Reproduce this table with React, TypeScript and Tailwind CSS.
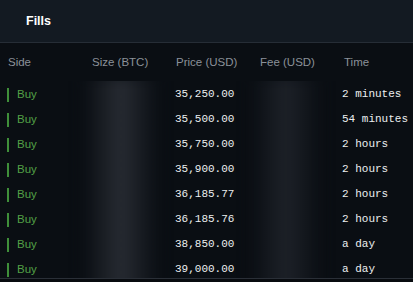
const FILLS = [
  { price: '35,250.00', time: '2 minutes' },
  { price: '35,500.00', time: '54 minutes' },
  { price: '35,750.00', time: '2 hours' },
  { price: '35,900.00', time: '2 hours' },
  { price: '36,185.77', time: '2 hours' },
  { price: '36,185.76', time: '2 hours' },
  { price: '38,850.00', time: 'a day' },
  { price: '39,000.00', time: 'a day' },
]

const COLS = ['Side', 'Size (BTC)', 'Price (USD)', 'Fee (USD)', 'Time']

export default function App() {
  return (
    <div className="w-[413px] h-[282px] bg-[#0a0e13] flex flex-col overflow-hidden" style={{ fontFamily: '"Liberation Sans", Arial, sans-serif' }}>
      {/* Header */}
      <div className="h-[43px] shrink-0 bg-[#131a22] border-b border-[#262d36] flex items-center px-[26px]">
        <span className="text-white font-bold text-[12.5px]">Fills</span>
      </div>

      {/* Column titles */}
      <div className="h-[38px] shrink-0 flex items-center pl-[8px] pt-[1px] text-[11.5px] text-[#8b9199]">
        {COLS.map(c => (
          <div key={c} className="w-[84px] shrink-0">{c}</div>
        ))}
      </div>

      {/* Rows */}
      <div className="relative h-[197px] shrink-0 overflow-hidden pt-[1px]">
        {FILLS.map((f, i) => (
          <div key={i} className="h-[25px] flex items-center pl-[7px]">
            <div className="w-[84px] shrink-0 flex items-center gap-[8px]">
              <span className="w-[2px] h-[14px] bg-[#3f8f3a]" />
              <span className="text-[11.5px] text-[#52a046]">Buy</span>
            </div>
            <div className="w-[84px] shrink-0" />
            <div className="w-[84px] shrink-0 text-[11px] text-[#eceef0]" style={{ fontFamily: '"Liberation Mono", monospace' }}>{f.price}</div>
            <div className="w-[83px] shrink-0" />
            <div className="flex-1 text-[11px] text-[#eceef0]" style={{ fontFamily: '"Liberation Mono", monospace' }}>{f.time}</div>
          </div>
        ))}

        {/* Redacted columns */}
        <div className="absolute left-[82px] top-[-4px] w-[78px] h-[220px] bg-gradient-to-r from-[#0a0e13] via-[#272b32] to-[#0a0e13] blur-[6px]" />
        <div className="absolute left-[250px] top-[-4px] w-[72px] h-[220px] bg-gradient-to-r from-[#0a0e13] via-[#1d2128] to-[#0a0e13] blur-[6px]" />
      </div>

      <div className="flex-1 border-t border-[#2a2f37] bg-[#080b0f]" />
    </div>
  )
}
